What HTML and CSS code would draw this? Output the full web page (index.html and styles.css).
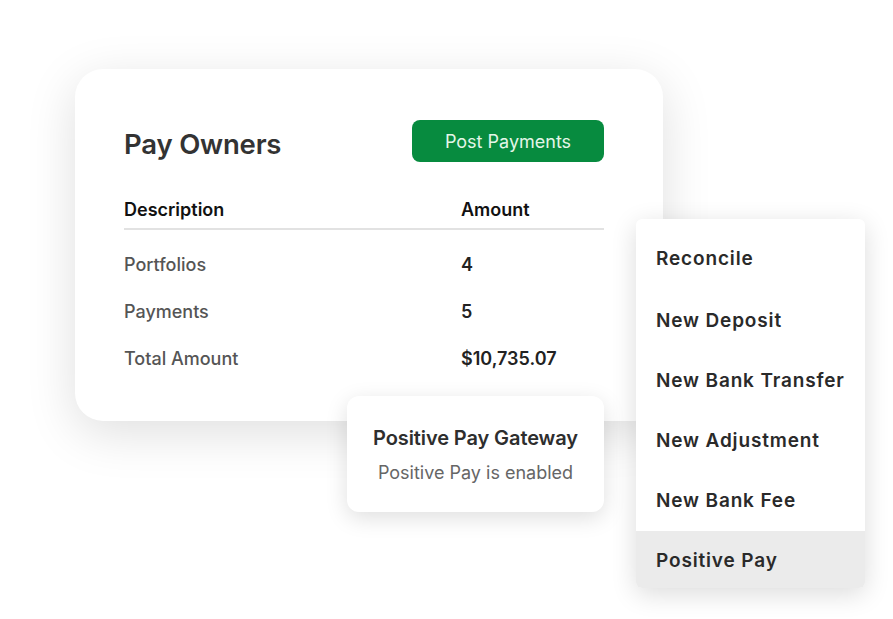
FILE: index.html
```html
<!DOCTYPE html>
<html>
<head>
<meta charset="utf-8">
<link rel="stylesheet" href="styles.css">
</head>
<body>
<div class="stage">
  <section class="card">
    <div class="card-head">
      <h1 class="title">Pay Owners</h1>
      <button class="btn">Post Payments</button>
    </div>
    <div class="table">
      <div class="row head"><span class="c1">Description</span><span class="c2">Amount</span></div>
      <div class="row body first"><span class="c1">Portfolios</span><span class="c2">4</span></div>
      <div class="row body"><span class="c1">Payments</span><span class="c2">5</span></div>
      <div class="row body"><span class="c1">Total Amount</span><span class="c2">$10,735.07</span></div>
    </div>
  </section>
  <div class="gateway">
    <div class="gw-title">Positive Pay Gateway</div>
    <div class="gw-sub">Positive Pay is enabled</div>
  </div>
  <ul class="menu">
    <li class="item">Reconcile</li>
    <li class="item">New Deposit</li>
    <li class="item">New Bank Transfer</li>
    <li class="item">New Adjustment</li>
    <li class="item">New Bank Fee</li>
    <li class="item active">Positive Pay</li>
  </ul>
</div>
</body>
</html>
```
FILE: styles.css
```css
* { box-sizing: border-box; }
html, body { margin: 0; padding: 0; background: #fff; }
body { font-family: Inter, "Noto Sans", sans-serif; width: 893px; height: 619px; overflow: hidden; }
.stage { position: relative; width: 893px; height: 619px; padding-top: 69px; padding-left: 75px; }
.card {
  width: 588px; height: 352px; background: #fff; border-radius: 28px;
  box-shadow: 0 12px 50px rgba(0,0,0,0.13);
  padding: 51px 59px 0 49px;
}
.card-head { display: flex; justify-content: space-between; align-items: center; height: 42px; }
.title { margin: 0; font-size: 27.5px; font-weight: 600; color: #333; letter-spacing: -0.2px; position: relative; top: 3px; }
.btn {
  width: 192px; height: 42px; border: none; border-radius: 8px; background: #078b3f;
  color: #e4f6e8; font-family: Inter, sans-serif; font-size: 18px; font-weight: 400;
}
.table { margin-top: 28px; width: 480px; }
.row { display: flex; font-size: 18px; }
.row .c1 { width: 337px; }
.row.head { height: 40px; line-height: 40px; border-bottom: 2px solid #e2e2e2; font-weight: 600; color: #111; }
.row.body { height: 47px; line-height: 47px; }
.row.body.first { margin-top: 11px; }
.row.body .c1 { color: #555; font-weight: 500; }
.row.body .c2 { color: #222; font-weight: 600; }
.gateway {
  position: absolute; left: 347px; top: 396px; width: 257px; height: 116px;
  background: #fff; border-radius: 12px; box-shadow: 0 6px 22px rgba(0,0,0,0.13);
  display: flex; flex-direction: column; align-items: center; padding-top: 29px;
}
.gw-title { font-size: 20px; font-weight: 600; color: #2e2e2e; line-height: 26px; letter-spacing: -0.1px; }
.gw-sub { font-size: 18px; color: #666; line-height: 22px; margin-top: 11px; }
.menu {
  position: absolute; left: 636px; top: 219px; width: 229px; height: 369px;
  margin: 0; padding: 10px 0 0 0; list-style: none; background: #fff; border-radius: 6px;
  overflow: hidden; box-shadow: 0 6px 26px rgba(0,0,0,0.14);
}
.item { height: 60px; line-height: 60px; padding-left: 20px; font-size: 19px; font-weight: 600; color: #2a2a2a; letter-spacing: 0.85px; }
.item:first-child { height: 62px; padding-bottom: 2px; }
.item.active { height: 57px; line-height: 59px; background: #ebebeb; }
```
